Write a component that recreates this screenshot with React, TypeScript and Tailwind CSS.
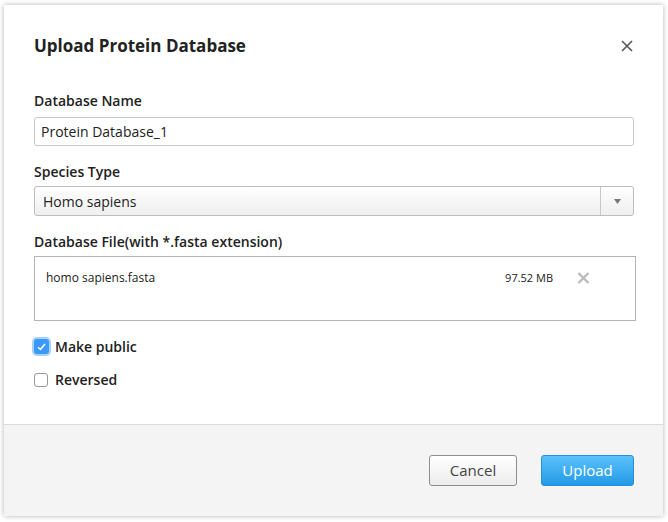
import { useState } from 'react';

const font = { fontFamily: '"Open Sans", "Noto Sans", sans-serif' };

export default function App() {
  const [name, setName] = useState('Protein Database_1');
  const [isPublic, setIsPublic] = useState(true);
  const [reversed, setReversed] = useState(false);

  return (
    <div className="w-[668px] h-[522px] bg-white pl-[4px] pt-[5px]" style={font}>
      <div className="w-[659px] h-[511px] bg-white flex flex-col shadow-[0_0_5px_rgba(0,0,0,0.3)]">
        <div className="flex-1 pl-[30px] pr-[29px]">
          <div className="flex items-center justify-between h-[40px] mt-[21px]">
            <h2 className="text-[17px] font-bold text-[#222]">Upload Protein Database</h2>
            <svg width="12" height="12" viewBox="0 0 12 12" className="mr-[1px]">
              <path d="M1 1L11 11M11 1L1 11" stroke="#555" strokeWidth="1.6" />
            </svg>
          </div>

          <label className="block mt-[25px] text-[14px] font-semibold text-[#222] leading-[20px]">Database Name</label>
          <input
            value={name}
            onChange={(e) => setName(e.target.value)}
            className="mt-[6px] w-full h-[29px] border border-[#c8c8c8] rounded-[3px] px-[6px] text-[14px] text-[#222] outline-none"
          />

          <label className="block mt-[16px] text-[14px] font-semibold text-[#222] leading-[20px]">Species Type</label>
          <div className="mt-[4px] flex h-[30px] border border-[#bdbdbd] rounded-[3px] bg-gradient-to-b from-white to-[#efefef]">
            <div className="flex-1 flex items-center px-[8px] text-[14px] text-[#222]">Homo sapiens</div>
            <div className="w-[33px] border-l border-[#c8c8c8] flex items-center justify-center">
              <svg width="7" height="5" viewBox="0 0 7 5"><path d="M0 0H7L3.5 5Z" fill="#777" /></svg>
            </div>
          </div>

          <label className="block mt-[16px] text-[14px] font-semibold text-[#222] leading-[20px]">Database File(with *.fasta extension)</label>
          <div className="mt-[4px] w-[602px] h-[65px] border border-[#b4b4b4] flex items-start pt-[12px] pl-[11px] text-[12px] text-[#222]">
            <span className="flex-1">homo sapiens.fasta</span>
            <span className="text-[11px] mt-[1px] mr-[24px]">97.52 MB</span>
            <svg width="13" height="12" viewBox="0 0 13 12" className="mt-[3px] mr-[45px]">
              <path d="M1.5 1L11.5 11M11.5 1L1.5 11" stroke="#bbb" strokeWidth="2.4" />
            </svg>
          </div>

          <label className="mt-[15px] flex items-center gap-[6px] text-[14px] font-semibold text-[#222] cursor-pointer" onClick={() => setIsPublic(!isPublic)}>
            <span className={`w-[15px] h-[15px] rounded-[3px] flex items-center justify-center ${isPublic ? 'bg-[#3b99fc] shadow-[0_0_0_2px_rgba(59,153,252,0.45)]' : 'border border-[#999] bg-white'}`}>
              {isPublic && (
                <svg width="9" height="8" viewBox="0 0 9 8"><path d="M1 4.2L3.4 6.5L8 1" stroke="white" strokeWidth="1.5" fill="none" /></svg>
              )}
            </span>
            Make public
          </label>

          <label className="mt-[12px] flex items-center gap-[7px] text-[14px] font-semibold text-[#222] cursor-pointer" onClick={() => setReversed(!reversed)}>
            <span className={`w-[14px] h-[14px] rounded-[3px] flex items-center justify-center ${reversed ? 'bg-[#3b99fc]' : 'border border-[#999] bg-white'}`}>
              {reversed && (
                <svg width="9" height="8" viewBox="0 0 9 8"><path d="M1 4.2L3.4 6.5L8 1" stroke="white" strokeWidth="1.5" fill="none" /></svg>
              )}
            </span>
            Reversed
          </label>
        </div>

        <div className="h-[92px] border-t border-[#dcdcdc] bg-[#f4f4f4] flex items-center justify-end gap-[24px] pr-[29px]">
          <button className="w-[88px] h-[31px] rounded-[3px] border border-[#8e8e8e] bg-gradient-to-b from-white to-[#ececec] text-[15px] text-[#444]">
            Cancel
          </button>
          <button className="w-[93px] h-[31px] rounded-[3px] border border-[#2a8fd6] bg-gradient-to-b from-[#5ac1fb] to-[#1f9ae6] text-[15px] text-white">
            Upload
          </button>
        </div>
      </div>
    </div>
  );
}
